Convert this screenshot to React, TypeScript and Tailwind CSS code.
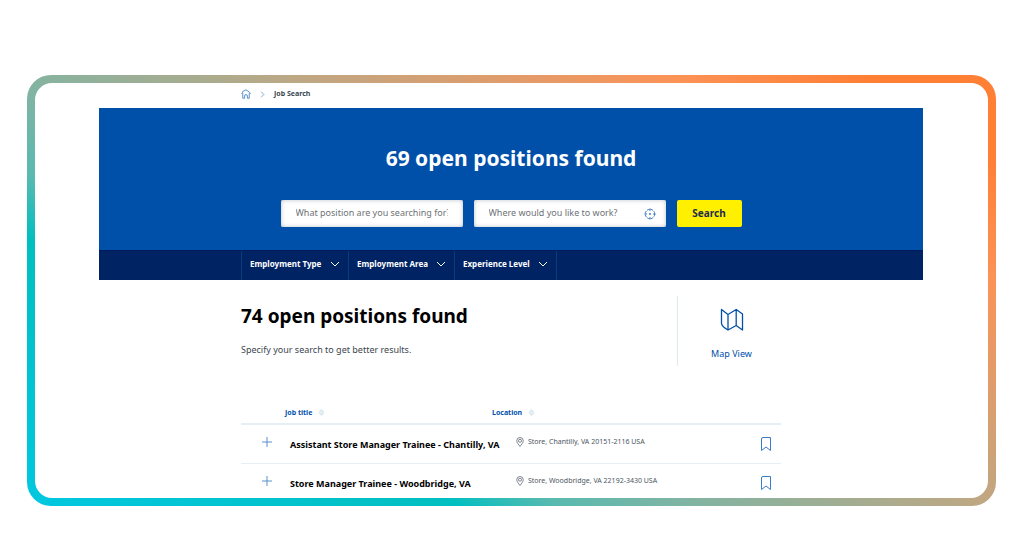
import { useState } from "react";

interface Job {
  title: string;
  location: string;
}

const jobs: Job[] = [
  {
    title: "Assistant Store Manager Trainee - Chantilly, VA",
    location: "Store, Chantilly, VA 20151-2116 USA",
  },
  {
    title: "Store Manager Trainee - Woodbridge, VA",
    location: "Store, Woodbridge, VA 22192-3430 USA",
  },
];

const filters = ["Employment Type", "Employment Area", "Experience Level"];

function HomeIcon() {
  return (
    <svg viewBox="0 0 20 20" className="size-[10px]" fill="none" stroke="currentColor" strokeWidth="1.8">
      <path d="M1 9.5 3 7.500V5.500L10 1.5l7 5 2 3M3.500 8v10.5h3.700v-4.500a2.800 2.800 0 0 1 5.600 0v4.500h3.700V8" strokeLinejoin="round" />
    </svg>
  );
}

function ChevronIcon({ className }: { className: string }) {
  return (
    <svg viewBox="0 0 10 10" className={className} fill="none" stroke="currentColor">
      <path d="m1 3 4 4 4-4" />
    </svg>
  );
}

function TargetIcon() {
  return (
    <svg viewBox="0 0 24 24" className="size-3" fill="none" stroke="currentColor" strokeWidth="1.8">
      <circle cx="12" cy="12" r="9.5" strokeDasharray="5.5 1.96" />
      <path d="M12 1v5M12 18v5M1 12h5M18 12h5" />
      <circle cx="12" cy="12" r="1.8" fill="currentColor" stroke="none" />
    </svg>
  );
}

function MapIcon() {
  return (
    <svg viewBox="0 0 24 24" className="size-6" fill="none" stroke="currentColor" strokeWidth="1.3" strokeLinejoin="round">
      <path d="M1.500 1.500v14q.3 3 6.500 6.500V6.500ZM8 6.500l8.200-5v16L8 22M16.200 1.500 22.500 6v16l-6.300-4.500" />
    </svg>
  );
}

function SortIcon() {
  return (
    <svg viewBox="0 0 8 8" className="size-[7px]" fill="currentColor">
      <path d="M4 0 7.800 3.600H.200ZM4 8 .200 4.400h7.600Z" />
    </svg>
  );
}

function PlusIcon() {
  return (
    <svg viewBox="0 0 10 10" className="size-[10px]" fill="none" stroke="currentColor">
      <path d="M5 0v10M0 5h10" strokeWidth="0.9" />
    </svg>
  );
}

function PinIcon() {
  return (
    <svg viewBox="0 0 16 20" className="h-[10px] w-2 shrink-0" fill="none" stroke="currentColor" strokeWidth="1.4">
      <path d="M8 19C6 15.500 1.500 12 1.500 7.500a6.500 6.500 0 0 1 13 0C14.500 12 10 15.500 8 19Z" />
      <circle cx="8" cy="7.500" r="3" />
    </svg>
  );
}

function BookmarkIcon() {
  return (
    <svg viewBox="0 0 10 14" className="h-[14px] w-[10px]" fill="none" stroke="currentColor">
      <path d="M2 .500h7.500v13L5 10 .500 13.500V2Q.500.500 2 .500Z" />
    </svg>
  );
}

export default function App() {
  const [saved, setSaved] = useState<string[]>([]);

  const toggleSaved = (title: string) =>
    setSaved((s) => (s.includes(title) ? s.filter((t) => t !== title) : [...s, title]));

  return (
    <div className="bg-white pt-[75px] pr-7 pb-[30px] pl-[27px] font-['Noto_Sans',sans-serif]">
      {/* gradient frame */}
      <div className="rounded-[24px] bg-[linear-gradient(32deg,#00c8e0_0%,#00bfc0_26%,#58bab0_32%,#80b4a3_40%,#bfa783_58%,#fb9357_80%,#ff7f35_92%)] p-2">
        <div className="rounded-[17px] bg-white pr-[65px] pl-16">
          <nav aria-label="Breadcrumb" className="mx-auto flex h-[25px] max-w-[540px] items-center gap-2 pb-[3px] text-[7px] text-[#4b86c6]">
            <a href="#" aria-label="Home">
              <HomeIcon />
            </a>
            <ChevronIcon className="size-[7px] -rotate-90" />
            <a href="#" className="font-bold text-[#3a4550]">
              Job Search
            </a>
          </nav>

          <header>
            <div className="flex h-[142px] flex-col items-center bg-[#0050aa] pt-9">
              <h1 className="text-[21px] leading-7 font-bold text-white">69 open positions found</h1>
              <form className="mt-7 flex gap-[11px]" onSubmit={(e) => e.preventDefault()}>
                <input
                  type="text"
                  aria-label="Position"
                  placeholder="What position are you searching for?"
                  className="h-[27px] w-[182px] rounded-xs bg-white px-[15px] pb-[2px] text-[9px] inset-shadow-[0_0_4px_#b9bfc6] outline-none placeholder:text-[#6e7276]"
                />
                <div className="flex h-[27px] w-[192px] items-center rounded-xs bg-white pr-[10px] pl-[15px] inset-shadow-[0_0_4px_#b9bfc6]">
                  <input
                    type="text"
                    aria-label="Location"
                    placeholder="Where would you like to work?"
                    className="min-w-0 flex-1 bg-transparent pb-[2px] text-[9px] outline-none placeholder:text-[#6e7276]"
                  />
                  <button type="button" aria-label="Use my location" className="text-[#2a6dbb]">
                    <TargetIcon />
                  </button>
                </div>
                <button type="submit" className="h-[27px] w-[65px] rounded-xs bg-[#fff000] text-[10px] font-bold text-[#1c2d50]">
                  Search
                </button>
              </form>
            </div>
            <div className="border-t border-[#001a5c] bg-[#002364]">
              <div className="mx-auto flex h-[29px] max-w-[540px] border-l border-[#0a3a80] text-white">
                {filters.map((f) => (
                  <div key={f} className="grid items-center border-r border-[#0a3a80]">
                    <select
                      aria-label={f}
                      className="col-start-1 row-start-1 h-full appearance-none bg-transparent pr-[26px] pb-[3px] pl-2 text-[8px] font-bold outline-none"
                    >
                      <option>{f}</option>
                    </select>
                    <ChevronIcon className="pointer-events-none col-start-1 row-start-1 mr-2 mb-[3px] size-[10px] justify-self-end" />
                  </div>
                ))}
              </div>
            </div>
          </header>

          <main className="mx-auto max-w-[540px] pt-4">
            <div className="flex justify-between">
              <div className="pt-1">
                <h2 className="text-[19px] leading-8 font-bold text-black">74 open positions found</h2>
                <p className="mt-[10px] text-[9px] leading-4 text-[#3c4650]">Specify your search to get better results.</p>
              </div>
              <div className="flex h-[70px] w-[104px] justify-center border-l border-[#dfe9f0] pl-1">
                <a href="#" className="flex flex-col items-center gap-4 pt-3 text-[9px] leading-3 text-[#0050aa]">
                  <MapIcon />
                  Map View
                </a>
              </div>
            </div>

            <table className="mt-9 w-full table-fixed border-collapse text-left">
              <thead>
                <tr className="h-[22px] border-b-2 border-[#e6eff5] text-[7px] leading-3 text-[#0050aa]">
                  <td className="w-11" />
                  <th>
                    <button type="button" className="flex items-center gap-[6px] font-bold">
                      Job title
                      <span className="text-[#dce8f0]">
                        <SortIcon />
                      </span>
                    </button>
                  </th>
                  <th className="w-[249px]">
                    <button type="button" className="flex items-center gap-[6px] font-bold">
                      Location
                      <span className="text-[#dce8f0]">
                        <SortIcon />
                      </span>
                    </button>
                  </th>
                  <td className="w-[40px]" />
                </tr>
              </thead>
              <tbody>
                {jobs.map((job) => (
                  <tr key={job.title} className="h-[39px] border-b border-[#e6eff5] last:h-[35px] last:border-b-0">
                    <td className="pt-3 pl-[21px] align-top">
                      <button type="button" aria-label="Show details" className="block text-[#4b86c6]">
                        <PlusIcon />
                      </button>
                    </td>
                    <td className="pt-3 pl-[5px] align-top text-[9px] leading-4 font-bold whitespace-nowrap text-black">
                      <a href="#">{job.title}</a>
                    </td>
                    <td className="pt-[11px] pl-6 align-top text-[7px] leading-3 whitespace-nowrap text-[#4c555e]">
                      <span className="flex items-center gap-1">
                        <PinIcon />
                        {job.location}
                      </span>
                    </td>
                    <td className="pt-3 align-top">
                      <button
                        type="button"
                        aria-label="Save job"
                        aria-pressed={saved.includes(job.title)}
                        onClick={() => toggleSaved(job.title)}
                        className="mr-[10px] ml-auto block text-[#3b7dc4]"
                      >
                        <BookmarkIcon />
                      </button>
                    </td>
                  </tr>
                ))}
              </tbody>
            </table>
          </main>
        </div>
      </div>
    </div>
  );
}
